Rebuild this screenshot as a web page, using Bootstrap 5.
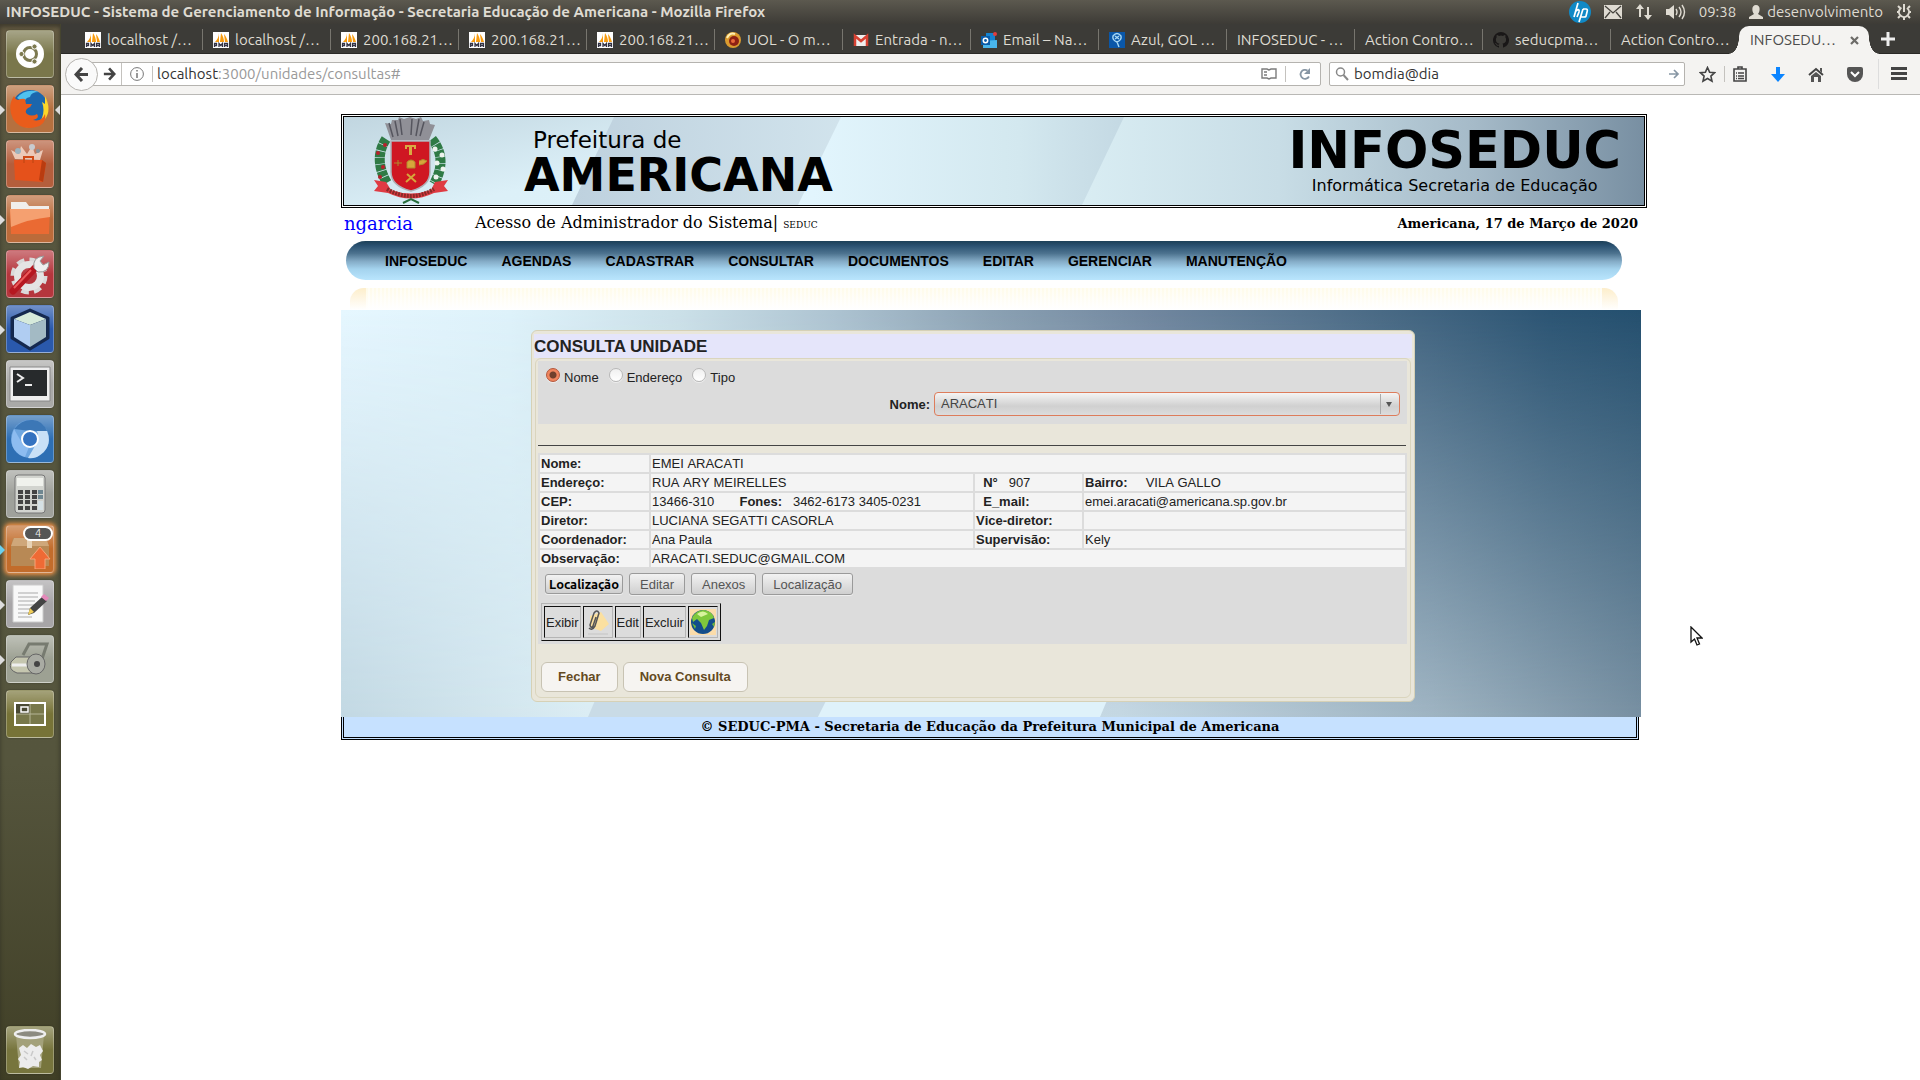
<!DOCTYPE html>
<html lang="pt-BR">
<head>
<meta charset="utf-8">
<meta name="viewport" content="width=device-width, initial-scale=1">
<title>INFOSEDUC</title>
<link rel="stylesheet" href="https://cdn.jsdelivr.net/npm/bootstrap@5.3.0/dist/css/bootstrap.min.css">
<style>
:root{--ui:"Ubuntu","Noto Sans","Open Sans",sans-serif;--doc:"Liberation Sans",Arial,sans-serif;--serif:"DejaVu Serif",serif}
body{font-family:var(--doc);font-size:13px;line-height:15px;color:#222;background:#fff}
svg{display:block;flex:none}
a{text-decoration:none}
/* desktop panel */
.deskbar{height:24px;background:linear-gradient(#5c594f,#3d3b36);color:#dfdbd2;font:15px/24px var(--ui);padding:0 8px 0 6px}
.deskbar h1{font:bold 15px/22px var(--ui);margin:0}
.tray{gap:13px}
.dock{width:61px;padding:6px 0 6px 6px;background:linear-gradient(#665c43,#57563f 12%,#55553d 70%,#403f26);border-right:1px solid #45442f;box-shadow:inset 0 3px 4px #2c2a22aa}
.tile{position:relative;width:48px;height:48px;margin-bottom:7px;border:1px solid #ffffff45;border-radius:4px;padding:0;display:grid;place-items:center;box-shadow:0 0 2px #0005;background:linear-gradient(#ffffff55,#fff0 50%) var(--c)}
.tile.on::before{content:"";position:absolute;left:-7px;top:19px;border:5px solid transparent;border-left-color:#ddd;border-right:0}
.tile.cur::after{content:"";position:absolute;right:-7px;top:19px;border:5px solid transparent;border-right-color:#ddd;border-left:0}
.tile.on.blue::before{border-left-color:#6cd0ef}
.tile.blue{box-shadow:0 0 4px 2px #ec8f45}
.pill{position:absolute;left:16px;top:0;width:30px;height:15px;border:2px solid #fff;border-radius:8px;background:#555;color:#eee;font:11px/11px var(--ui);text-align:center}
/* browser */
.tabstrip{height:30px;background:#3c3b37;padding-left:14px;border-bottom:1px solid #2a2926}
.tabitem{width:128px;height:21px;margin-top:5px;padding:0 4px 0 10px;border:0;border-right:1px solid #77756e;background:none;color:#dfdbd2;font:15px/20px var(--ui);display:flex;align-items:center;gap:6px;white-space:nowrap;text-align:left}
.tabitem.last{border-color:transparent}
.tabitem.active{position:relative;width:130px;height:28px;margin-top:2px;background:#f4f3f1;color:#4c4c4c;border:0;border-radius:10px 10px 0 0;padding:0 10px 0 11px;justify-content:space-between}
.tabitem.active::before,.tabitem.active::after{content:"";position:absolute;bottom:0;width:10px;height:16px}
.tabitem.active::before{left:-10px;background:radial-gradient(ellipse 10px 16px at 0 0,#fff0 96%,#f4f3f1)}
.tabitem.active::after{right:-10px;background:radial-gradient(ellipse 10px 16px at 100% 0,#fff0 96%,#f4f3f1)}
.toolbar{height:41px;background:#f4f3f1;border-bottom:1px solid #b9b8b5;padding:0 13px 0 4px;font:15px/22px var(--ui)}
.fieldbox{height:24px;border:1px solid #b5b3af;border-radius:2px;background:#fff;min-width:0}
.fieldbox input{border:0;outline:0;background:none;padding:0;color:#333;min-width:0}
.roundback{width:33px;height:33px;border:1px solid #b5b3af;border-radius:50%;background:#fafafa;display:grid;place-items:center;padding:0;margin-right:-9px;position:relative;z-index:1}
.plainbtn{border:0;background:none;padding:0;display:grid;place-items:center}
.fwd{padding:0 5px 0 13px}
.vline{width:1px;height:16px;background:#c4c2be}
.vline.tall{height:22px}
.searchbox{width:356px;margin-right:14px}
.tools{gap:23px}
.menuicon{margin-left:-8px}
/* site */
.site{width:78%;max-width:1306px;margin-left:280px;padding-top:19px}
.masthead{position:relative;height:94px;border:3px double #000;overflow:hidden;color:#000;font-family:"DejaVu Sans",sans-serif}
.scenery{position:absolute;inset:0;width:100%;height:100%}
.fit{position:relative}
.crest{margin:0 73px 0 27px}
.city-a{font-size:23px;line-height:28px;padding:9px 0 0 9px}
.city-b{font-size:46px;line-height:42px;font-weight:bold}
.brand{padding:7px 23px 0 0}
.brand-a{font-size:51px;line-height:53px;font-weight:bold}
.brand-b{font-size:16px;line-height:18px}
.userline{font-family:var(--serif);color:#000;height:33px;padding:0 9px 2px 3px;font-size:16px}
.userline a{font-size:18px;color:#00f;width:131px}
.userline .dept{font-size:9px}
.userline strong{font-size:13px}
.inset-r{margin-right:6px}
.menubar{height:39px;border-radius:20px;margin:0 25px 0 5px;padding-left:39px;gap:34px;background:linear-gradient(#1c4058,#2a5171 12%,#4d738f 32%,#84abc6 52%,#a4d3ee 72%,#b9e5fd)}
.menubar a{font:bold 14px/40px var(--doc);color:#000}
.glow{height:22px;margin:8px 29px 0 9px;border-radius:14px 14px 0 0;background:linear-gradient(#fdeecb,#fff) left/16px 100% no-repeat,linear-gradient(#fdeecb,#fff) right/16px 100% no-repeat,repeating-linear-gradient(90deg,#fff0 0 2px,#ffffff80 2px 4px),linear-gradient(#fffbe9,#fff)}
.stage{position:relative;padding:20px 0 15px 190px}
.sheet{position:relative;width:884px;max-width:100%;border:1px solid #d6d1b6;border-radius:6px;padding:3px;background:#e9e6da}
.sheet h2{font:bold 17px/25px var(--doc);background:#e5e5fa;margin:0 -1px;height:24px;color:#222}
.inner{border:1px solid #dad5bd;border-radius:6px;padding:2px 3px 5px 2px}
.filters{background:#dcdcdc;height:63px;padding:6px 7px 7px 8px}
.opts{gap:10px;line-height:22px}
.choice{gap:4px;margin-top:3px}
.opt input{appearance:none;width:14px;height:14px;border-radius:50%;border:1px solid #b8b8b8;background:linear-gradient(#f0f0f0,#fff);margin:1px 4px 0 0;box-shadow:0 1px #eee}
.opt input:checked{background:radial-gradient(#70402c 0 3px,#f0855e 4px);border-color:#b5563a}
.pick{width:466px;height:24px;border:1px solid #dd7c5b;border-radius:4px;font:13px/20px var(--doc);font-kerning:none;color:#444;padding:0 6px;appearance:none;background:linear-gradient(#f4f4f4,#d0d0d0 60%,#dcdcdc)}
.pickwrap{position:relative}
.pickwrap svg{position:absolute;right:1px;top:2px;pointer-events:none}
.rule{height:30px;border-top:1px solid #444;margin:21px 1px 0 0}
.record{background:#dcdcdc;margin-top:-22px;padding-bottom:3px}
.data{width:100%;border-collapse:separate;border-spacing:2px;table-layout:fixed;color:#222;font-kerning:none}
.data th,.data td{background:#f4f4f4;padding:1px;height:17px;white-space:pre;vertical-align:middle}
.c1{width:109px}.c2{width:322px}.c3{width:107px}
.actions{gap:6px;padding:4px 0 0 7px}
.gtkbtn{height:22px;border:1px solid #9a9a9a;border-radius:3px;background:linear-gradient(#f2f2f2,#cfcfcf);color:#555;font:13px/19px var(--doc);padding:0 10px;box-shadow:0 1px #eee}
.gtkbtn.strong{height:20px;padding:0 3px;color:#000;font:bold 13px/17px var(--ui)}
.icons{border:1px solid #111;border-top-color:#b5b5b5;border-left-color:#b5b5b5;border-collapse:separate;border-spacing:2px;margin:8px 0 0 3px}
.icons td{border:1px solid #b5b5b5;border-top-color:#111;border-left-color:#111;height:32px;padding:1px;vertical-align:middle}
.closing{gap:5px;padding:18px 0 0 3px}
.bigbtn{height:30px;border:1px solid #c8c3b3;border-radius:6px;background:#f6f4f1;color:#644a22;font:bold 13px/28px var(--doc);padding:0 16px}
.bottomline{height:23px;margin-right:8px;border:3px double #000;border-top:0;background:#c6e1ff;color:#000;font:bold 13px/20px var(--serif);text-align:center}
.pointer{position:absolute;left:1690px;top:626px}
</style>
<script src="https://cdn.jsdelivr.net/npm/bootstrap@5.3.0/dist/js/bootstrap.bundle.min.js"></script>
</head>
<body class="d-flex flex-column min-vh-100 position-relative">
<svg width="0" height="0" class="position-absolute">
<defs>
<symbol id="pma" viewBox="0 0 16 16"><path fill="#fff" d="M0 0h16v16H0z"/><path fill="#f89c0e" d="M6 1v9H2C4 8 6 5 6 1zM8 1c2 3 3 6 3 9H7zM11 2c2 2 3 5 4 8h-3z"/><path stroke="#334" stroke-width="1.3" fill="none" d="M1.500 15v-3.500h2v2h-2M6 15v-3.500l1.700 2 1.700-2V15M11.500 15v-3.500h3V15m-3-1.500h3"/></symbol>
<linearGradient id="top" x2="1"><stop stop-color="#e6f7ff"/><stop offset=".13" stop-color="#def2fa"/><stop offset=".26" stop-color="#cbe0e8"/><stop offset=".38" stop-color="#adc3d1"/><stop offset=".5" stop-color="#8ba1b3"/><stop offset=".62" stop-color="#71879f"/><stop offset=".8" stop-color="#496a85"/><stop offset=".93" stop-color="#2c5574"/><stop offset="1" stop-color="#25506f"/></linearGradient>
<linearGradient id="bot" x2="1"><stop stop-color="#c2d8e3"/><stop offset=".19" stop-color="#dbedf4"/><stop offset=".4" stop-color="#cfe1ea"/><stop offset=".6" stop-color="#c5d8e3"/><stop offset=".84" stop-color="#9fb4c2"/><stop offset="1" stop-color="#7890a2"/></linearGradient>
<linearGradient id="fade" y2="1" x2="0"><stop stop-color="#000"/><stop offset="1" stop-color="#fff"/></linearGradient>
<mask id="down"><path fill="url(#fade)" d="M0 0h1300v406H0z"/></mask>
<linearGradient id="b1" x2="1" y2=".3"><stop stop-color="#c1d6e0"/><stop offset=".35" stop-color="#dcf0f8"/><stop offset="1" stop-color="#e0f2fa"/></linearGradient>
<linearGradient id="b2" x2="1"><stop stop-color="#bed1de"/><stop offset="1" stop-color="#d6e8f0"/></linearGradient>
<linearGradient id="b3" x2="1"><stop stop-color="#e3f6fe"/><stop offset=".5" stop-color="#d3e8ef"/><stop offset="1" stop-color="#b3c8d6"/></linearGradient>
<linearGradient id="b4" x2="1" y2="0"><stop stop-color="#d9edf3"/><stop offset=".35" stop-color="#c8dde6"/><stop offset=".7" stop-color="#a5bac8"/><stop offset="1" stop-color="#788fa2"/></linearGradient>
</defs></svg>

<header class="deskbar d-flex align-items-center justify-content-between">
<h1>INFOSEDUC - Sistema de Gerenciamento de Informação - Secretaria Educação de Americana - Mozilla Firefox</h1>
<div class="tray d-flex align-items-center">
<svg width="22" height="22" viewBox="0 0 22 22"><circle cx="11" cy="11" r="11" fill="#1089c6"/><path d="M9 2 5 16M7 10q4-3 3 1l-2 5M14 8l-4 13M14 8h3q2 0 1 3l-1 4q0 1-2 1h-3" fill="none" stroke="#fff" stroke-width="1.700"/></svg>
<svg width="18" height="14" viewBox="0 0 18 14"><path fill="#dfdbd2" d="M0 0h18v14H0z"/><path d="m1 1 8 7 8-7M1 13l5-6m11 6-5-6" fill="none" stroke="#45433d" stroke-width="1.300"/></svg>
<svg width="18" height="18" viewBox="0 0 18 18"><path fill="#dfdbd2" d="M5 1 9 6H6v8H4V6H1zM13 17l4-5h-3V4h-2v8H9z"/></svg>
<svg width="20" height="18" viewBox="0 0 20 18"><path fill="#dfdbd2" d="M0 6h3l5-4v14l-5-4H0z"/><path d="M10 6q2 3 0 6M13 4q4 5 0 10M16 2q5 7 0 14" fill="none" stroke="#dfdbd2" stroke-width="1.400"/></svg>
<span>09:38</span>
<span class="d-flex align-items-center gap-1"><svg width="14" height="16" viewBox="0 0 14 16"><path fill="#dfdbd2" d="M7 1c5 0 4 7 2 9l5 3v2H0v-2l5-3C3 8 2 1 7 1z"/></svg>desenvolvimento</span>
<svg width="16" height="18" viewBox="1 0 16 18"><circle cx="9" cy="9" r="5" fill="none" stroke="#dfdbd2" stroke-width="2" stroke-dasharray="25 6.400" transform="rotate(-54 9 9)"/><path d="M9 1v8M9 14v3M2 9h2m10 0h2M5 13l-2 2m10-2 2 2M5 5 3 3m10 2 2-2" fill="none" stroke="#dfdbd2" stroke-width="2"/></svg>
</div>
</header>

<div class="d-flex flex-grow-1">
<nav class="dock d-flex flex-column flex-shrink-0" aria-label="Lançador">
<button class="tile" style="--c:#7a774b"><svg width="30" height="30" viewBox="0 0 30 30"><circle cx="15" cy="15" r="14" fill="#fff"/><circle cx="15" cy="15" r="6.500" fill="none" stroke="#7d7a50" stroke-width="3"/><g fill="#7d7a50" stroke="#fff"><circle cx="6.500" cy="15" r="2.600"/><circle cx="19.500" cy="7.500" r="2.600"/><circle cx="19.500" cy="22.500" r="2.600"/></g></svg></button>
<button class="tile on cur" style="--c:#b5703f"><svg width="42" height="42" viewBox="0 0 42 42"><circle cx="21" cy="20" r="18" fill="#1b66ad"/><path d="M8 10q8-10 22-6-8 0-9 5-6 1-5 6z" fill="#4fc1ef"/><path d="M36 8q7 14 0 23-8 10-20 8 13 0 17-9 3-8 0-16l3 2z" fill="#fbd62a"/><path d="M5 8q1 3 4 4 4-2 7-1l1 5h6q-1 3-4 4-4 3-1 6 5 3 10 0 3 4-4 6 9 2 12-6 2 10-9 13-15 4-23-8Q-2 18 5 8z" fill="#ea5c1b"/></svg></button>
<button class="tile" style="--c:#b45e3c"><svg width="40" height="44" viewBox="0 0 40 44"><path d="M5 17 1 8l8 4 2-8 6 8 5-8 3 8 8-4-3 10z" fill="#f8ded0" opacity=".8"/><circle cx="8" cy="9" r="3" fill="#9db4bf"/><circle cx="22" cy="5" r="3" fill="#c8cbd0"/><circle cx="28" cy="9" r="2" fill="#86939c"/><path d="M4 18h28l4 3-3 19-28-2z" fill="#e5511b"/><path d="m32 18 4 3-3 19-4-2z" fill="#b93c10"/><path d="M14 21v-6h9v6" fill="none" stroke="#d04a15" stroke-width="2"/></svg></button>
<button class="tile on" style="--c:#bb6b3a"><svg width="42" height="40" viewBox="0 0 42 40"><path d="M2 3h15l3 4h20v28H2z" fill="#f0eeec"/><path d="M1 10h40l-1 25H2z" fill="#ea6a33"/><path d="M1 10h40v8Q20 20 2 28z" fill="#f5a070"/></svg></button>
<button class="tile" style="--c:#b5363d"><svg width="42" height="42" viewBox="0 0 42 42"><circle cx="20" cy="23" r="15" fill="none" stroke="#d9d9d9" stroke-width="7" stroke-dasharray="7 4.780"/><circle cx="20" cy="23" r="11.500" fill="none" stroke="#e4e4e4" stroke-width="7"/><path d="m4 38 22-23" stroke="#b51720" stroke-width="7" stroke-linecap="round"/><path d="m5 35 17-18" stroke="#ea5a5a" stroke-width="2"/><path d="M25 15q-2-11 10-12l-4 5 3 4 6-3q0 11-11 10z" fill="#eee" stroke="#999"/></svg></button>
<button class="tile on" style="--c:#2a59ac"><svg width="44" height="44" viewBox="0 0 44 44"><path d="M22 3 40 11v20L22 42 4 31V11z" fill="#15294f" stroke="#15294f" stroke-width="3" stroke-linejoin="round"/><path d="m22 5 16 7-16 6-16-6z" fill="#d6eadb"/><path d="m6 12 16 6v22L6 30z" fill="#b0cdf2"/><path d="m38 12-16 6v22l16-10z" fill="#a3bac4"/></svg></button>
<button class="tile" style="--c:#a9a9a7"><svg width="42" height="36" viewBox="0 0 42 36"><path d="M1 1h40v34H1z" fill="#eee" stroke="#888"/><path d="M4 4h34v26H4z" fill="#272a2c"/><path d="m8 8 6 4-6 4M16 19h7" fill="none" stroke="#eee" stroke-width="2"/></svg></button>
<button class="tile" style="--c:#2e6fb4"><svg width="42" height="42" viewBox="0 0 42 42"><circle cx="21" cy="21" r="19" fill="#6ea6e0"/><path d="M5 11q8-10 19-9 10 1 14 11H21z" fill="#3c77b6"/><path d="M38 13q6 15-7 24-5 4-12 3l11-19-2-8z" fill="#c9e0f6"/><path d="m5 11 8 14 7 4-4 10Q-3 32 5 11z" fill="#8dbcf0"/><circle cx="21" cy="21" r="8" fill="#3472c0" stroke="#fff" stroke-width="2"/></svg></button>
<button class="tile" style="--c:#9fa19b"><svg width="32" height="40" viewBox="0 0 32 40"><rect width="30" height="38" x="1" y="1" rx="3" fill="#d2d4cf" stroke="#777"/><path d="M3 4h26v8H3z" fill="#f0f2ed"/><path d="M4 18h19M4 23h19M4 28h19M4 34h12m2 0h5" stroke="#444" stroke-width="4" stroke-dasharray="5 2"/><path d="M24 18h5m-5 5h5" stroke="#6f8791" stroke-width="4"/><path d="M24 27h5v9h-5z" fill="#d5e1e5"/></svg></button>
<button class="tile on blue" style="--c:#c26c2b"><svg width="42" height="40" viewBox="0 0 42 40"><path d="M4 9h33l3 8v20H2V17z" fill="#b88955"/><path d="m2 17 3-8h32l3 8z" fill="#cfa77a"/><path d="M18 9h5v10h-5z" fill="#e7d2b5"/><path d="m31 18 10 12h-5v10H26V30h-5z" fill="#ef6a35" stroke="#f7a277"/></svg><span class="pill">4</span></button>
<button class="tile on" style="--c:#a7a5a7"><svg width="38" height="42" viewBox="0 0 38 42"><path d="M2 2h30v37H2z" fill="#f8f8f8" stroke="#ccc"/><path d="M7 10h20M7 14h20M7 18h17M7 22h18M7 26h14M7 30h12M7 34h14" stroke="#aaa"/><path d="m17 32 2-7 12-11 5 4-13 12z" fill="#444"/><path d="m17 32 2-7 4 4z" fill="#f0cd58"/><path d="m30 14 3-3 5 4-3 3z" fill="#e589bb"/></svg></button>
<button class="tile on" style="--c:#9da193"><svg width="42" height="40" viewBox="0 0 42 40"><path d="M14 16 20 5h18l-6 18" fill="none" stroke="#777b70" stroke-width="3"/><path d="M7 18h20v16H8q-9-3-6-11z" fill="#c5c6af" stroke="#666"/><path d="M3 26h20" stroke="#eee" stroke-width="3"/><ellipse cx="27" cy="25" rx="9" ry="10" fill="#a9aba3" stroke="#666"/><circle cx="28" cy="25" r="3" fill="#444"/></svg></button>
<button class="tile" style="--c:#777337"><svg width="32" height="24" viewBox="0 0 32 24"><path d="M1 1h30v22H1z" fill="#78784b" stroke="#fff" stroke-width="2"/><path d="M2 2h14v10H2z" fill="#4a4a34"/><path d="M16 2v20M2 12h28" stroke="#b5b597"/><path d="M7 5h7v5H7z" fill="none" stroke="#fff" stroke-width="1.500"/></svg></button>
<button class="tile mt-auto mb-0" style="--c:#77753d"><svg width="34" height="42" viewBox="0 0 34 42"><path d="M3 6h28l-3 33H6z" fill="#a3a17a"/><path d="m6 19 4-3 4 3 4-4 5 3 4-2 3 6-3 4 2 5-3 2v5l-6-1-5 3-5-2-4 1 1-6-2-3 3-4z" fill="#ececec"/><path d="m11 22 4 3m5-3-2 5m-7 1 3 3m7-3 2 3" stroke="#c9c9c9" stroke-width="1.500"/><ellipse cx="17" cy="5" rx="15" ry="4" fill="#8c8b80" stroke="#eee" stroke-width="2.500"/></svg></button>
</nav>

<div class="flex-grow-1 d-flex flex-column">
<div class="tabstrip d-flex" role="tablist">
<button class="tabitem"><svg width="16" height="16"><use href="#pma"/></svg>localhost /…</button>
<button class="tabitem"><svg width="16" height="16"><use href="#pma"/></svg>localhost /…</button>
<button class="tabitem"><svg width="16" height="16"><use href="#pma"/></svg>200.168.21…</button>
<button class="tabitem"><svg width="16" height="16"><use href="#pma"/></svg>200.168.21…</button>
<button class="tabitem"><svg width="16" height="16"><use href="#pma"/></svg>200.168.21…</button>
<button class="tabitem"><svg width="16" height="16" viewBox="0 0 16 16"><circle cx="8" cy="8" r="8" fill="#db9b2f"/><circle cx="9" cy="9" r="5" fill="#8e2114"/><path d="M2 6q3-6 8-4" stroke="#fff0b2" stroke-width="2" fill="none"/><circle cx="8" cy="9" r="2" fill="#ea693a"/></svg>UOL - O m…</button>
<button class="tabitem"><svg width="16" height="16" viewBox="0 0 16 16"><path fill="#eee" d="M1 3h14v11H1z"/><path d="M2 14V4l6 5 6-5v10" fill="none" stroke="#d64132" stroke-width="2.500"/></svg>Entrada - n…</button>
<button class="tabitem"><svg width="16" height="16" viewBox="0 0 16 16"><path fill="#1382cf" d="M5 1h9v14H5z"/><path fill="#49b6ec" d="m2 9 14-1v8H2z"/><path fill="#0a5ca8" d="M0 4h9v9H0z"/><circle cx="4.500" cy="8.500" r="2.200" fill="none" stroke="#fff" stroke-width="1.500"/><circle cx="14" cy="2" r="2" fill="#e33b3b"/></svg>Email – Na…</button>
<button class="tabitem"><svg width="16" height="16" viewBox="0 0 16 16"><path fill="#0a57a8" d="M0 0h16v16H0z"/><path d="M8 10q-5-2-4-6 4-5 8 0 1 4-4 6l2 5M6 4l4 3M6 7l4-3" fill="none" stroke="#a7d8f4" stroke-width="1.400"/></svg>Azul, GOL …</button>
<button class="tabitem">INFOSEDUC - …</button>
<button class="tabitem">Action Contro…</button>
<button class="tabitem"><svg width="16" height="16" viewBox="0 0 16 16"><path fill="#191717" d="M8 0a8 8 0 0 0-2.500 15.600c.4 0 .5-.2.500-.400v-1.500c-2.200.5-2.700-1-2.700-1-.4-1-1-1.200-1-1.200-.7-.5 0-.5 0-.5.900 0 1.300.8 1.300.8.7 1.300 2 .9 2.400.7 0-.5.300-.9.500-1.100-1.800-.2-3.600-.9-3.600-4 0-.9.300-1.600.8-2.100 0-.3-.4-1.100.100-2.200 0 0 .7-.2 2.200.8a7.500 7.500 0 0 1 4 0c1.500-1 2.200-.8 2.200-.8.5 1.100.1 1.900.1 2.200.5.500.8 1.200.8 2.100 0 3.100-1.900 3.800-3.700 4 .3.200.6.700.6 1.500v2.300c0 .2.100.5.500.400A8 8 0 0 0 8 0z"/></svg>seducpma…</button>
<button class="tabitem last">Action Contro…</button>
<button class="tabitem active">INFOSEDU…<svg width="9" height="9" viewBox="0 0 9 9"><path d="m1 1 7 7m0-7L1 8" stroke="#6c6b68" stroke-width="2.200"/></svg></button>
<button class="plainbtn ms-2 ps-1" aria-label="Nova aba"><svg width="14" height="14" viewBox="0 0 14 14"><path d="M7 0v14M0 7h14" stroke="#eee" stroke-width="3"/></svg></button>
</div>
<div class="toolbar d-flex align-items-center">
<button class="roundback" aria-label="Voltar"><svg width="15" height="15" viewBox="0 0 15 15"><path d="M8 1 2 7.500 8 14M2 7.500h12" fill="none" stroke="#444" stroke-width="3"/></svg></button>
<div class="fieldbox d-flex align-items-center flex-grow-1 pe-1 me-2">
<button class="plainbtn fwd" aria-label="Avançar"><svg width="13" height="14" viewBox="0 0 15 15"><path d="m7 1 6 6.500L7 14M13 7.500H1" fill="none" stroke="#444" stroke-width="3"/></svg></button>
<span class="vline tall"></span>
<svg class="mx-2" width="14" height="14" viewBox="0 0 14 14"><circle cx="7" cy="7" r="6.400" fill="none" stroke="#777"/><path d="M7 6v5M7 3v1.500" stroke="#777" stroke-width="1.500"/></svg>
<span class="vline me-1"></span>
<a class="flex-grow-1 text-truncate" href="#" style="color:#999"><span style="color:#333">localhost</span>:3000/unidades/consultas#</a>
<svg class="me-2" width="16" height="12" viewBox="0 0 16 12"><path d="M8 2 6 1H1v9h5l2 1 2-1h5V1h-5zM3 4h3M3 7h3" fill="none" stroke="#7c7c7c" stroke-width="1.400"/></svg>
<span class="vline me-2"></span>
<svg class="mx-1" width="14" height="14" viewBox="0 0 14 14"><path d="M11 9.500A4.500 4.500 0 1 1 9.500 3.500" fill="none" stroke="#8796a4" stroke-width="1.800"/><path fill="#8796a4" d="M12 1v6H6z"/></svg>
</div>
<div class="fieldbox searchbox d-flex align-items-center px-1">
<svg class="me-1" width="16" height="16" viewBox="0 0 16 16"><circle cx="6.500" cy="6" r="4" fill="none" stroke="#888" stroke-width="1.500"/><path d="m9.500 9 4.500 5" stroke="#888" stroke-width="2"/></svg>
<input class="flex-grow-1" aria-label="Pesquisar" value="bomdia@dia">
<svg width="11" height="10" viewBox="0 0 11 10"><path d="M0 5h9M5 1l4 4-4 4" fill="none" stroke="#8796a4" stroke-width="1.700"/></svg>
</div>
<div class="d-flex align-items-center">
<svg width="17" height="17" viewBox="0 0 17 17"><path d="m8.500 1.500 2.100 4.700 5 .5-3.700 3.400 1.100 5-4.500-2.600-4.500 2.600 1.100-5L1.400 6.700l5-.5z" fill="none" stroke="#444" stroke-width="1.600"/></svg>
<span class="vline mx-2"></span>
<svg width="14" height="16" viewBox="0 0 14 16"><path d="M1 3h12v12H1zM5 3V1h4v2M3 7h1m1 0h6M3 10h1m1 0h6M3 12.500h1m1 0h6" fill="none" stroke="#444" stroke-width="1.600"/></svg>
</div>
<div class="tools d-flex align-items-center flex-shrink-0 ps-4">
<svg width="14" height="15" viewBox="0 0 14 15"><path fill="#0a84ff" d="M5 0h4v7h5l-7 8-7-8h5z"/></svg>
<svg width="16" height="15" viewBox="0 0 16 15"><path d="m1 8 7-6 7 6" fill="none" stroke="#444" stroke-width="2"/><path fill="#555" d="m3 9 5-4 5 4v6h-3v-5H6v5H3zM12 1h2v5l-2-2z"/></svg>
<svg width="16" height="15" viewBox="0 0 16 15"><path fill="#555" d="M0 2q0-2 2-2h12q2 0 2 2v5a8 8 0 0 1-16 0z"/><path d="m4 5 4 4 4-4" fill="none" stroke="#fff" stroke-width="2"/></svg>
<svg class="menuicon" width="29" height="30" viewBox="0 0 29 30"><path d="M.5 0v30" stroke="#ddd"/><path d="M13 9.500h16M13 14.500h16M13 19.500h16" stroke="#444" stroke-width="3"/></svg>
</div>
</div>

<main class="site">
<div class="masthead d-flex justify-content-between">
<svg class="scenery" viewBox="0 0 1300 88" preserveAspectRatio="none"><path fill="url(#b1)" d="M0 0h1300v88H0z"/><path fill="url(#b2)" d="M270 0h300v88H228z"/><path fill="url(#b3)" d="M497 0h400v88H454z"/><path fill="url(#b4)" d="M780 0h520v88H738z"/></svg>
<div class="fit d-flex">
<svg class="crest" width="80" height="88" viewBox="0 0 80 88">
<path d="M14 6l6 1 1-4 6 0 1-3 5 2 6-2 6 2 5-2 2 4 6-1 1 4 5 1-6 15H20z" fill="#909097"/><path d="m18 6 4 14m2-16 3 15m2-17 2 16m10-16-1 16m8-16-3 17m8-14-4 14" stroke="#55555e" stroke-width="1.500"/>
<g fill="none" stroke="#2f7a45" stroke-width="10" stroke-dasharray="6 .7"><path d="M15 22Q2 42 16 66M61 22q16 20 2 45"/></g>
<g fill="#b8202c"><circle cx="7" cy="36" r="2"/><circle cx="12" cy="50" r="2"/><circle cx="9" cy="60" r="2"/><circle cx="14" cy="28" r="2"/></g><g fill="#eef3ee"><circle cx="64" cy="32" r="2.500"/><circle cx="71" cy="38" r="2.500"/><circle cx="66" cy="46" r="2.500"/><circle cx="72" cy="52" r="2.500"/><circle cx="65" cy="60" r="2.500"/></g>
<path d="M20 24h39v31q0 14-19 19-20-5-20-19z" fill="#cf1722" stroke="#aeb1b7" stroke-width="1.500"/>
<path d="M34 28h11v4h-2v-2h-2v8h-3v-8h-2v2h-2z" fill="#d9aa42"/><path d="M36 51v-6q4-4 8 0v6zM23 46h8m-4-3v6M48 44q4-3 8 0-3 4-8 4" fill="#d6a63b" stroke="#b08b2c"/><path d="m35 65 9-8m-8 0 9 8" stroke="#d6a63b" stroke-width="2"/>
<path d="m3 63 12 2 5 8q20 7 40 0l4-8 13-2-4 6 4 5-14 2q-23 11-46 0L3 74l4-5z" fill="#df3b43"/><path d="M16 72q24 14 47 0" fill="none" stroke="#8a2a28" stroke-width="4" stroke-dasharray="2 1"/><path d="m32 86 8-4 8 4" fill="none" stroke="#276c3b" stroke-width="2"/></svg>
<div>
<div class="city-a">Prefeitura de</div>
<div class="city-b">AMERICANA</div>
</div></div>
<div class="fit brand text-center">
<div class="brand-a">INFOSEDUC</div>
<div class="brand-b">Informática Secretaria de Educação</div>
</div>
</div>
<div class="userline d-flex align-items-center">
<a href="#">ngarcia</a>
<span>Acesso de Administrador do Sistema| <span class="dept">SEDUC</span></span>
<strong class="ms-auto">Americana, 17 de Março de 2020</strong>
</div>
<nav class="menubar d-flex">
<a href="#">INFOSEDUC</a><a href="#">AGENDAS</a><a href="#">CADASTRAR</a><a href="#">CONSULTAR</a><a href="#">DOCUMENTOS</a><a href="#">EDITAR</a><a href="#">GERENCIAR</a><a href="#">MANUTENÇÃO</a>
</nav>
<div class="glow"></div>
<div class="stage inset-r">
<svg class="scenery" viewBox="0 0 1300 406" preserveAspectRatio="none"><path fill="url(#top)" d="M0 0h1300v406H0z"/><g mask="url(#down)"><path fill="url(#bot)" d="M0 0h1300v406H0z"/></g><path fill="#c9dbe6" d="M258 380h232l-13 26H247z"/><path fill="#dff2fa" d="M490 380h280l-11 26H477z"/></svg>
<section class="sheet">
<h2>CONSULTA UNIDADE</h2>
<div class="inner">
<form class="filters">
<div class="opts d-flex">
<label class="opt d-flex"><input type="radio" name="por" checked>Nome</label>
<label class="opt d-flex"><input type="radio" name="por">Endereço</label>
<label class="opt d-flex"><input type="radio" name="por">Tipo</label>
</div>
<div class="choice d-flex justify-content-end align-items-center">
<label class="fw-bold" for="unidade">Nome:</label>
<div class="pickwrap"><select id="unidade" class="pick"><option>ARACATI</option></select><svg width="20" height="20" viewBox="0 0 20 20"><path d="M1.500 0v20" stroke="#aaa"/><path fill="#555" d="M7 8h6l-3 5z"/></svg></div>
</div>
</form>
<div class="rule"></div>
<div class="record">
<table class="data">
<colgroup><col class="c1"><col class="c2"><col class="c3"><col></colgroup>
<tr><th>Nome:</th><td colspan="3">EMEI ARACATI</td></tr>
<tr><th>Endereço:</th><td>RUA ARY MEIRELLES</td><td>  <b>N°</b>   907</td><td><b>Bairro:</b>     VILA GALLO</td></tr>
<tr><th>CEP:</th><td>13466-310       <b>Fones:</b>   3462-6173 3405-0231</td><th>  E_mail:</th><td>emei.aracati@americana.sp.gov.br</td></tr>
<tr><th>Diretor:</th><td>LUCIANA SEGATTI CASORLA</td><th>Vice-diretor:</th><td></td></tr>
<tr><th>Coordenador:</th><td>Ana Paula</td><th>Supervisão:</th><td>Kely</td></tr>
<tr><th>Observação:</th><td colspan="3">ARACATI.SEDUC@GMAIL.COM</td></tr>
</table>
<div class="actions d-flex align-items-center">
<button class="gtkbtn strong">Localização</button><button class="gtkbtn">Editar</button><button class="gtkbtn">Anexos</button><button class="gtkbtn">Localização</button>
</div>
<table class="icons"><tr><td>Exibir</td>
<td><svg width="26" height="28" viewBox="0 0 26 28"><path d="m5 8 11-4 8 12-8 7-11-4z" fill="#fbe0a0"/><path d="M11 9 8 18q-2 3-3-1l4-12q3-4 5 0l-4 13q-3 5-6 2" fill="none" stroke="#555" stroke-width="1.500"/><path d="M3 26h20" stroke="#c4c4c4"/></svg></td>
<td>Edit</td><td>Excluir</td>
<td><svg width="26" height="26" viewBox="0 0 26 26"><path fill="#fbdcaa" d="M0 0h26v26H0z"/><circle cx="13" cy="13" r="12" fill="#134d8b"/><path d="M2 9q4-8 12-8 8 1 10 8l-5 2-2 6-3 4-3-7-4-4-4 3z" fill="#7fc83c"/><path d="M7 5q6-5 11 0l-7 3z" fill="#d8f39d"/><path d="m2 14 4 3-1 3zM22 15l3-2-1 5z" fill="#6fbb39"/></svg></td></tr></table>
</div>
<div class="closing d-flex">
<button class="bigbtn">Fechar</button><button class="bigbtn">Nova Consulta</button>
</div>
</div>
</section>
</div>
<footer class="bottomline">© SEDUC-PMA - Secretaria de Educação da Prefeitura Municipal de Americana</footer>
</main>
</div>
</div>
<svg class="pointer" width="13" height="20" viewBox="0 0 13 20"><path d="M1 1v15l3.500-3 2.500 6 2.500-1L7 12h5z" fill="#fff" stroke="#111" stroke-width="1.300"/></svg>
</body>
</html>
